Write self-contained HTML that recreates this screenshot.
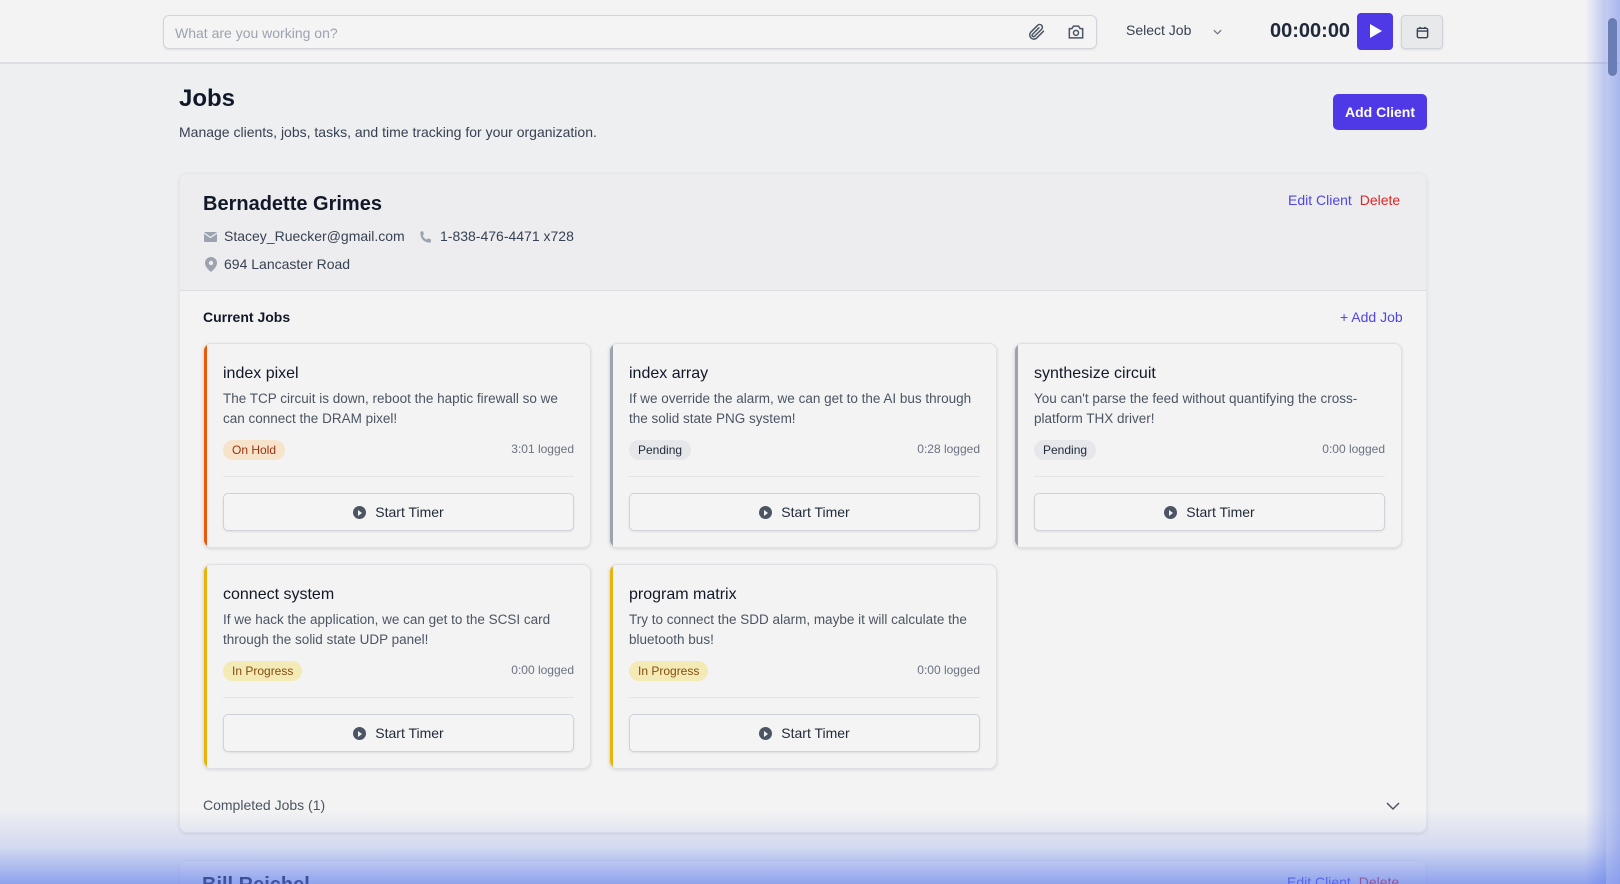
<!DOCTYPE html>
<html><head><meta charset="utf-8">
<style>
*{box-sizing:border-box;margin:0;padding:0}
html,body{width:1620px;height:884px;overflow:hidden}
body{background:#eeeff1;font-family:"Liberation Sans",sans-serif;color:#111827;position:relative}
.abs{position:absolute}
.hdr{left:0;top:0;width:1620px;height:64px;background:#f3f3f3;border-bottom:2px solid #dcdde0}
.inp{left:163px;top:15px;width:934px;height:34px;border:1px solid #d1d5db;border-radius:6px;background:#f4f4f4;box-shadow:0 1px 2px rgba(0,0,0,.08)}
.inp span{position:absolute;left:11px;top:9px;font-size:14px;color:#9ca3af}
.card{left:179px;top:173px;width:1248px;height:660px;background:#f3f3f3;border:1px solid #e5e7eb;border-radius:8px;box-shadow:0 1px 3px rgba(0,0,0,.1);overflow:hidden}
.ch{position:absolute;left:0;top:0;width:100%;height:117px;background:#ededef;border-bottom:1px solid #dcdde0}
.job{position:absolute;width:388px;height:205px;background:#f3f3f3;border:1px solid #dfe0e3;border-radius:8px;box-shadow:0 1px 3px rgba(0,0,0,.12);overflow:hidden}
.job .bar{position:absolute;left:0;top:0;bottom:0;width:3px}
.job h3{position:absolute;left:19px;top:21px;font-size:16px;font-weight:normal;color:#111827}
.job p{position:absolute;left:19px;top:45px;width:350px;font-size:13.5px;line-height:20px;color:#4b5563}
.badge{position:absolute;left:19px;top:96px;height:20px;padding:0 9px;border-radius:10px;font-size:12px;line-height:20px}
.log{position:absolute;right:16px;top:98px;font-size:12px;color:#6b7280}
.job .hr{position:absolute;left:19px;right:16px;top:132px;border-top:1px solid #e3e4e7}
.btn{position:absolute;left:19px;right:16px;top:149px;height:38px;border:1px solid #cfd2d8;border-radius:5px;background:#f4f4f4;box-shadow:0 1px 2px rgba(0,0,0,.08);text-align:center;font-size:14px;line-height:36px;color:#1f2937}
.btn i{display:inline-block;width:13px;height:13px;border-radius:50%;background:#4b5563;vertical-align:-2px;margin-right:9px;position:relative}
.btn i:after{content:"";position:absolute;left:5px;top:3.5px;border-left:4px solid #f4f4f4;border-top:3px solid transparent;border-bottom:3px solid transparent}
.hold{background:#f6e3c9;color:#9a3412}.pend{background:#e6e7ea;color:#1f2937}.prog{background:#f3eab5;color:#854d0e}
</style></head><body>
<div class="abs hdr"></div>
<div class="abs inp"><span>What are you working on?</span>
<svg class="abs" style="left:862px;top:6px" width="20" height="20" viewBox="0 0 24 24" fill="none" stroke="#4b5563" stroke-width="1.8" stroke-linecap="round"><path d="M21 11l-8.5 8.5a5 5 0 01-7-7L14 4a3.3 3.3 0 014.7 4.7l-8.5 8.5a1.7 1.7 0 01-2.4-2.4L15.5 7"/></svg>
<svg class="abs" style="left:902px;top:6px" width="20" height="20" viewBox="0 0 24 24" fill="none" stroke="#4b5563" stroke-width="1.8"><path d="M4 8h3l2-3h6l2 3h3v11H4z"/><circle cx="12" cy="13" r="3"/></svg>
</div>
<div class="abs" style="left:1126px;top:22px;font-size:14px;color:#374151">Select Job</div>
<svg class="abs" style="left:1212px;top:27px" width="11" height="10" viewBox="0 0 12 10" fill="none" stroke="#6b7280" stroke-width="1.3"><path d="M2 3l4 4 4-4"/></svg>
<div class="abs" style="left:1270px;top:20px;font-size:20px;font-weight:bold;color:#1f2937">00:00:00</div>
<div class="abs" style="left:1357px;top:13px;width:36px;height:37px;background:#4f39e6;border-radius:4px"><div class="abs" style="left:13px;top:11px;border-left:12px solid #fff;border-top:7.5px solid transparent;border-bottom:7.5px solid transparent"></div></div>
<div class="abs" style="left:1401px;top:15px;width:42px;height:34px;background:#e8e9eb;border:1px solid #cfd2d6;border-radius:4px;box-shadow:0 1px 2px rgba(0,0,0,.1)">
<svg class="abs" style="left:13px;top:9px" width="15" height="15" viewBox="0 0 16 16" fill="none" stroke="#374151" stroke-width="1.5"><rect x="2.5" y="3.5" width="11" height="10" rx="1.5"/><path d="M2.5 6.5h11M5.5 2v2M10.5 2v2"/></svg></div>

<div class="abs" style="left:179px;top:85px;font-size:24px;font-weight:bold">Jobs</div>
<div class="abs" style="left:179px;top:124px;font-size:14px;color:#374151">Manage clients, jobs, tasks, and time tracking for your organization.</div>
<div class="abs" style="left:1333px;top:94px;width:94px;height:36px;background:#4f39e6;border-radius:5px;color:#fff;font-size:14px;font-weight:bold;text-align:center;line-height:36px">Add Client</div>

<div class="abs card">
<div class="ch"></div>
<div class="abs" style="left:23px;top:19px;font-size:20px;font-weight:bold;color:#111827">Bernadette Grimes</div>
<div class="abs" style="left:1108px;top:18px;font-size:14px;color:#4f46e5">Edit Client <span style="color:#dc2626;margin-left:4px">Delete</span></div>
<svg class="abs" style="left:24px;top:57px" width="14" height="12" viewBox="0 0 14 12"><rect x="0" y="1" width="13" height="10" rx="1" fill="#9ca3af"/><path d="M0 2l6.5 4.5L13 2" stroke="#ededef" stroke-width="1.3" fill="none"/></svg>
<div class="abs" style="left:44px;top:54px;font-size:14px;color:#374151">Stacey_Ruecker@gmail.com</div>
<svg class="abs" style="left:239px;top:56px" width="14" height="14" viewBox="0 0 20 20"><path fill="#9ca3af" d="M2 3a1 1 0 011-1h2.2a1 1 0 011 .8l.7 3.3a1 1 0 01-.5 1.1l-1.2.7a11 11 0 005.9 5.9l.7-1.2a1 1 0 011.1-.5l3.3.7a1 1 0 01.8 1V17a1 1 0 01-1 1h-2C7.8 18 2 12.2 2 5V3z"/></svg>
<div class="abs" style="left:260px;top:54px;font-size:14px;color:#374151">1-838-476-4471 x728</div>
<svg class="abs" style="left:25px;top:83px" width="12" height="15" viewBox="0 0 12 15"><path fill="#9ca3af" d="M6 0a6 6 0 00-6 6c0 4.5 6 9 6 9s6-4.5 6-9a6 6 0 00-6-6zm0 8.2A2.2 2.2 0 116 3.8a2.2 2.2 0 010 4.4z"/></svg>
<div class="abs" style="left:44px;top:82px;font-size:14px;color:#374151">694 Lancaster Road</div>
<div class="abs" style="left:23px;top:135px;font-size:14px;font-weight:bold">Current Jobs</div>
<div class="abs" style="left:1160px;top:135px;font-size:14px;color:#4f46e5">+ Add Job</div>

<div class="job" style="left:23px;top:169px"><div class="bar" style="background:#ea580c"></div><h3>index pixel</h3><p>The TCP circuit is down, reboot the haptic firewall so we can connect the DRAM pixel!</p><span class="badge hold">On Hold</span><span class="log">3:01 logged</span><div class="hr"></div><div class="btn"><i></i>Start Timer</div></div>
<div class="job" style="left:429px;top:169px"><div class="bar" style="background:#9ca3af"></div><h3>index array</h3><p>If we override the alarm, we can get to the AI bus through the solid state PNG system!</p><span class="badge pend">Pending</span><span class="log">0:28 logged</span><div class="hr"></div><div class="btn"><i></i>Start Timer</div></div>
<div class="job" style="left:834px;top:169px"><div class="bar" style="background:#9ca3af"></div><h3>synthesize circuit</h3><p>You can't parse the feed without quantifying the cross-platform THX driver!</p><span class="badge pend">Pending</span><span class="log">0:00 logged</span><div class="hr"></div><div class="btn"><i></i>Start Timer</div></div>
<div class="job" style="left:23px;top:390px"><div class="bar" style="background:#eab308"></div><h3>connect system</h3><p>If we hack the application, we can get to the SCSI card through the solid state UDP panel!</p><span class="badge prog">In Progress</span><span class="log">0:00 logged</span><div class="hr"></div><div class="btn"><i></i>Start Timer</div></div>
<div class="job" style="left:429px;top:390px"><div class="bar" style="background:#eab308"></div><h3>program matrix</h3><p>Try to connect the SDD alarm, maybe it will calculate the bluetooth bus!</p><span class="badge prog">In Progress</span><span class="log">0:00 logged</span><div class="hr"></div><div class="btn"><i></i>Start Timer</div></div>

<div class="abs" style="left:23px;top:623px;font-size:14px;color:#4b5563">Completed Jobs (1)</div>
<svg class="abs" style="left:1206px;top:627px" width="14" height="10" viewBox="0 0 14 10" fill="none" stroke="#4b5563" stroke-width="1.5"><path d="M1 2l6 6 6-6"/></svg>
</div>

<div class="abs" style="left:179px;top:860px;width:1248px;height:60px;background:#f3f3f3;border:1px solid #e5e7eb;border-radius:8px"></div>
<div class="abs" style="left:202px;top:874px;font-size:20px;font-weight:bold">Bill Reichel</div>
<div class="abs" style="left:1287px;top:874px;font-size:14px;color:#4f46e5">Edit Client <span style="color:#dc2626;margin-left:4px">Delete</span></div>

<div class="abs" style="left:0;top:810px;width:1620px;height:74px;background:linear-gradient(to bottom,rgba(90,120,235,0),rgba(90,120,235,.18) 50%,rgba(90,120,235,.65))"></div>
<div class="abs" style="left:1585px;top:0;width:35px;height:884px;background:linear-gradient(to right,rgba(90,120,235,0),rgba(90,120,235,.6))"></div>
<div class="abs" style="left:1606px;top:0;width:14px;height:884px;background:rgba(220,225,245,.25)"></div>
<div class="abs" style="left:1608px;top:18px;width:9px;height:58px;background:#6a7db5;border-radius:5px"></div>
</body></html>
